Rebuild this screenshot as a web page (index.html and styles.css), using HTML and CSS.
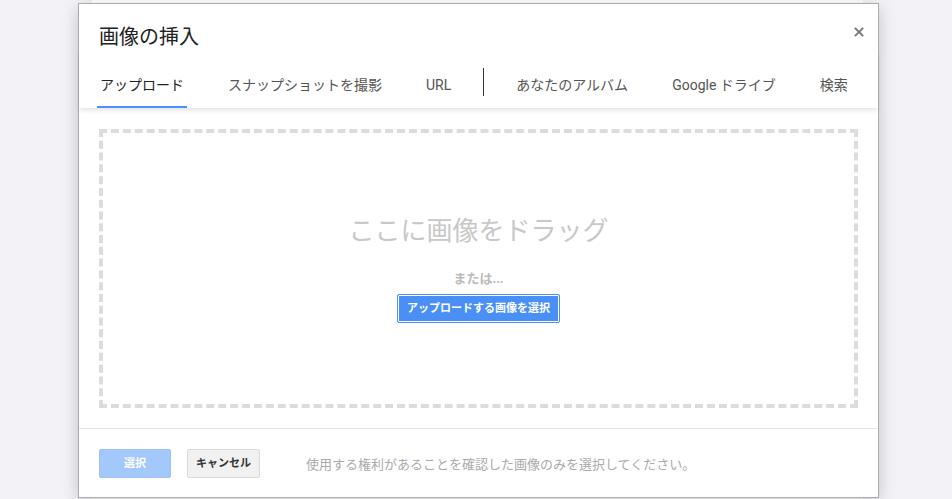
FILE: index.html
```html
<!DOCTYPE html>
<html lang="ja">
<head>
<meta charset="utf-8">
<title>画像の挿入</title>
<link rel="stylesheet" href="styles.css">
</head>
<body>
<div class="page"></div>
<div class="dialog" role="dialog">
  <div class="dialog-header">
    <div class="dialog-title">画像の挿入</div>
    <svg class="close" width="10" height="10" viewBox="0 0 10 10" aria-label="閉じる">
      <path d="M1.5 1.5 L8.5 8.5 M8.5 1.5 L1.5 8.5" stroke="#777" stroke-width="1.8" stroke-linecap="square"/>
    </svg>
  </div>
  <div class="tabs">
    <div class="tab active">アップロード</div>
    <div class="tab">スナップショットを撮影</div>
    <div class="tab">URL</div>
    <div class="tab-sep"></div>
    <div class="tab">あなたのアルバム</div>
    <div class="tab">Google ドライブ</div>
    <div class="tab">検索</div>
  </div>
  <div class="content">
    <div class="dropzone">
      <div class="drop-title">ここに画像をドラッグ</div>
      <div class="drop-or">または...</div>
      <button class="btn btn-primary btn-focus">アップロードする画像を選択</button>
    </div>
  </div>
  <div class="footer">
    <button class="btn btn-disabled">選択</button>
    <button class="btn btn-default">キャンセル</button>
    <span class="footer-note">使用する権利があることを確認した画像のみを選択してください。</span>
  </div>
</div>
</body>
</html>
```

FILE: styles.css
```css
* { box-sizing: border-box; }

html, body {
  margin: 0;
  height: 100%;
}

body {
  background: #f2f2f7;
  font-family: "Liberation Sans", "Noto Sans CJK JP", sans-serif;
  overflow: hidden;
}

.page {
  margin-left: 92px;
  width: 771px;
  height: 100%;
  background: #ffffff;
}

.dialog {
  position: absolute;
  left: 78px;
  top: 3px;
  width: 801px;
  height: 495px;
  background: #fff;
  border: 1px solid #acacac;
  box-shadow: 0 4px 16px rgba(0, 0, 0, 0.2);
  display: flex;
  flex-direction: column;
}

.dialog-header {
  display: flex;
  justify-content: space-between;
  align-items: flex-start;
  padding: 21px 14px 0 20px;
}

.dialog-title {
  font-family: Roboto, "Noto Sans CJK JP", sans-serif;
  font-size: 20px;
  line-height: 24px;
  color: #222;
}

.close {
  margin-top: 2px;
  display: block;
}

.tabs {
  display: flex;
  align-items: flex-start;
  padding-left: 18px;
  height: 59px;
  box-shadow: 0 3px 5px -1px rgba(0, 0, 0, 0.12);
  position: relative;
  z-index: 1;
  font-family: Roboto, "Noto Sans CJK JP", sans-serif;
}

.tab {
  font-size: 14px;
  line-height: 20px;
  color: #555;
  padding: 26px 3px 11px;
  border-bottom: 2px solid transparent;
  margin: 0 19px;
  white-space: nowrap;
}

.tab:first-child { margin-left: 0; }

.tab.active {
  color: #222;
  border-bottom-color: #4d90fe;
}

.tab-sep {
  width: 1px;
  height: 28px;
  margin: 19px 10px 0;
  background: #333;
}

.content {
  padding: 21px 20px 20px;
}

.dropzone {
  height: 279px;
  border: 4px dashed #dcdcdc;
  display: flex;
  flex-direction: column;
  align-items: center;
  justify-content: center;
}

.drop-title {
  font-size: 26px;
  line-height: 32px;
  color: #c8c8c8;
  margin-bottom: 24px;
}

.drop-or {
  font-size: 13px;
  line-height: 16px;
  font-weight: bold;
  color: #bbb;
  margin-bottom: 7px;
}

.btn {
  font-family: "Liberation Sans", "Noto Sans CJK JP", sans-serif;
  font-size: 11px;
  font-weight: bold;
  height: 29px;
  padding: 0 9px;
  border-radius: 2px;
  border: 1px solid;
  line-height: 27px;
  white-space: nowrap;
}

.btn-primary {
  background: #4a8ff5;
  border-color: #4d90fe;
  color: #fff;
}

.btn-focus {
  box-shadow: inset 0 0 0 1px #fff;
}

.footer {
  margin-top: auto;
  border-top: 1px solid #e5e5e5;
  display: flex;
  align-items: center;
  padding: 20px 20px 19px;
}

.btn-disabled {
  width: 72px;
  background: #a3c8fb;
  border-color: #9cc2f6;
  color: #fff;
  margin-right: 16px;
}

.btn-default {
  width: 73px;
  background: #f1f1f1;
  border-color: #d9d9d9;
  color: #333;
  margin-right: 46px;
  padding: 0;
}

.footer-note {
  font-size: 13px;
  color: #aaa;
}
```
